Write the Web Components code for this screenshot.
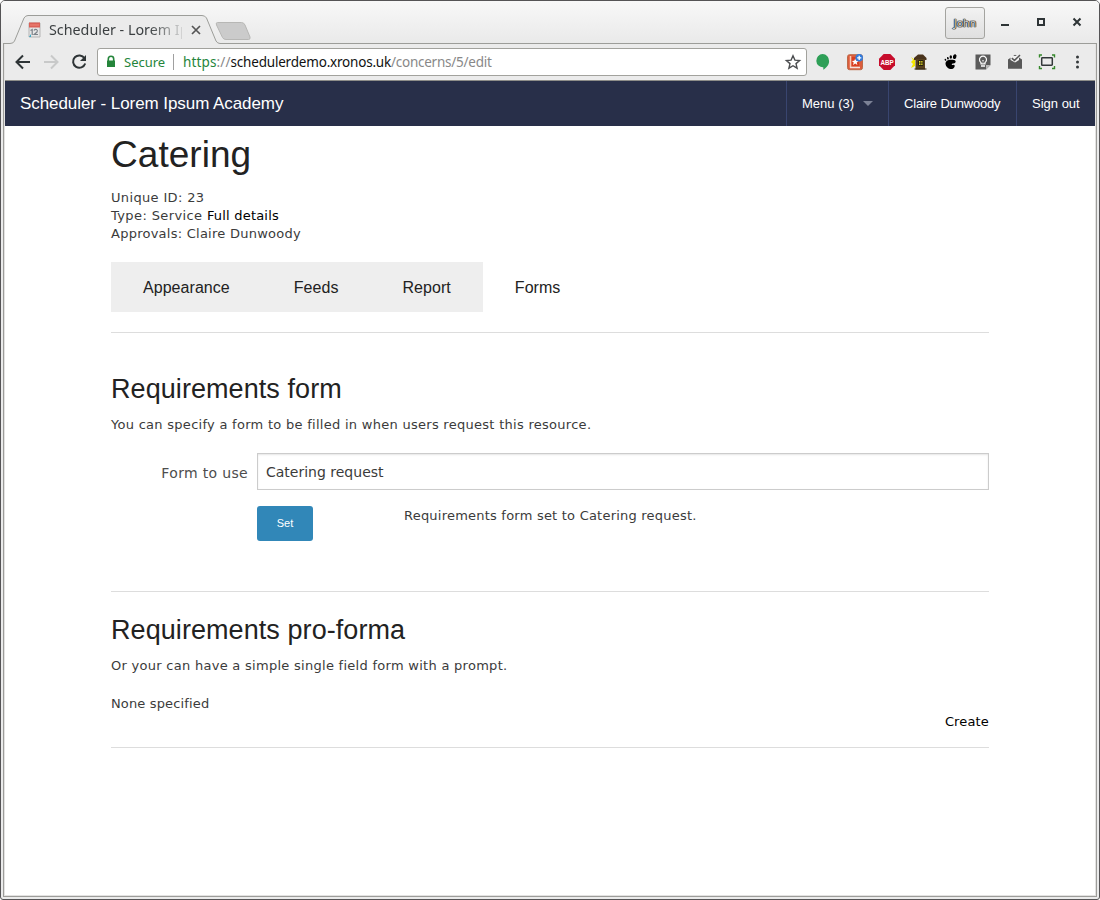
<!DOCTYPE html>
<html lang="en">
<head>
<meta charset="utf-8">
<title>Scheduler - Lorem Ipsum Academy</title>
<style>
html,body{margin:0;padding:0;background:#fff;height:900px;overflow:hidden}
</style>
</head>
<body>
<browser-window>
  <tab-strip slot="tabs" user="John">Scheduler - Lorem Ip</tab-strip>
  <tool-bar slot="tools"></tool-bar>
  <nav-bar>
    <span slot="title">Scheduler - Lorem Ipsum Academy</span>
    <nav-item arrow style="width:102px">Menu (3)</nav-item>
    <nav-item style="width:128px;letter-spacing:-.17px">Claire Dunwoody</nav-item>
    <nav-item style="width:79px">Sign out</nav-item>
  </nav-bar>
  <concern-page></concern-page>
</browser-window>
<script>
function define(name, html, setup) {
  const t = document.createElement('template');
  t.innerHTML = html;
  customElements.define(name, class extends HTMLElement {
    constructor() {
      super();
      this.attachShadow({mode: 'open'}).append(t.content.cloneNode(true));
    }
    connectedCallback() { if (setup) setup(this, this.shadowRoot); }
  });
}

define('browser-window', `<style>
:host{display:flex;flex-direction:column;box-sizing:border-box;width:1100px;height:900px;border:1px solid #555456;border-radius:5px 5px 3px 3px;background:#ebebeb;overflow:hidden;font-family:"DejaVu Sans",sans-serif}
.frame{flex:1;display:flex;flex-direction:column;min-height:0;margin:0 2px 2px;border:1px solid #9d9d9a;border-top:0;padding:0 1px 1px;background:#e3e2e1}
.view{flex:1;background:#fff;min-height:0}
</style><slot name="tabs"></slot><div class="frame"><slot name="tools"></slot><div class="view"><slot></slot></div></div>`);

define('tab-strip', `<style>
:host{display:flex;height:43px;box-sizing:border-box;position:relative;background:linear-gradient(#f8f8f8,#e9e9e9);font:15px "Noto Sans",sans-serif;color:#3b3f41}
.shape{position:absolute;left:-1px;top:-1px}
.label{display:flex;align-items:center;height:27px;padding:15px 0 0 27px;position:relative}
.name{width:133px;margin-left:8px;overflow:hidden;white-space:nowrap;font-size:14.3px;-webkit-mask-image:linear-gradient(90deg,#000 100px,transparent 138px);mask-image:linear-gradient(90deg,#000 100px,transparent 138px)}
.x{margin-left:9px}
.right{margin-left:auto;display:flex;align-items:center;padding-right:1px;position:relative;color:#333}
.user{box-sizing:border-box;width:40px;height:32px;margin-right:13px;border:1px solid #a4a4a0;border-radius:3px;background:linear-gradient(#f2f2f2,#dfdfdf);font:10.6px/31px "Noto Sans",sans-serif;text-align:center;color:#d8d8d8;-webkit-font-smoothing:antialiased;text-shadow:0 0 1px #222,0 0 1px #222,0 0 1px #222,0 0 1px #333,0 0 1px #333}
</style>
<svg class="shape" width="1100" height="44"><path d="M3 43.500H10Q13.500 43.500 14.500 41L24 18Q25.500 15.500 28 15.500H202Q205 15.500 206.500 18L216 41Q217.500 43.500 220 43.500H1097V44H3Z" fill="#ebebeb"/><path d="M3 43.500H10Q13.500 43.500 14.500 41L24 18Q25.500 15.500 28 15.500H202Q205 15.500 206.500 18L216 41Q217.500 43.500 220 43.500H1097" fill="none" stroke="#9c9d99"/><path d="M217.500 22.500H241.500Q244 22.500 245 25L250 37Q250.500 39.500 248.500 39.500H226Q223.500 39.500 222.500 37.500L216.500 25Q215.500 22.500 217.500 22.500Z" fill="#cbcbcb" stroke="#b7b7b5"/></svg>
<div class="label"><svg width="13" height="16" viewBox="0 0 13 16"><path d="M1 1H12V15H1Z" fill="#e6e6e6" stroke="#b5b5b5"/><path d="M1 .5H12V5.500H1Z" fill="#db6158"/><path d="M2 3h9" stroke="#f08a7b"/><path d="M2.500 8.500l1.700-1V13M6 8.500q.8-1.500 2.500-1 1.500 1 .5 2.500L6.200 12.500H10" fill="none" stroke="#7d838a" stroke-width="1.200"/><path d="M1 15l2-3v3z" fill="#36a6c4"/></svg><span class="name"><slot></slot></span><svg class="x" width="10" height="10" viewBox="0 0 10 10"><path d="M1 1L9 9M9 1L1 9" stroke="#555" stroke-width="1.700"/></svg></div>
<div class="right"><div class="user"></div><svg width="100" height="32" viewBox="0 0 100 32"><path d="M3 18h8" stroke="#2e3436" stroke-width="2"/><rect x="40" y="12" width="6" height="6" fill="none" stroke="#2e3436" stroke-width="2"/><path d="M75.500 11.500L82.500 18.500M82.500 11.500L75.500 18.500" stroke="#2e3436" stroke-width="2"/></svg></div>`,
(el, r) => { r.querySelector('.user').textContent = el.getAttribute('user'); });

define('tool-icon', `<style>:host{display:block;width:16px;height:16px}svg{display:block;overflow:visible}</style><svg width="16" height="16" viewBox="0 0 16 16"></svg>`,
(el, r) => {
  const art = {
    back: '<path d="M15 8H2M8 1.500L1.500 8L8 14.500" fill="none" stroke="#2e3436" stroke-width="2"/>',
    forward: '<path d="M1 8H14M8 1.500L14.500 8L8 14.500" fill="none" stroke="#c8c9c9" stroke-width="2"/>',
    reload: '<path d="M13.500 4.200A6.200 6.200 0 1 0 14.200 9.500" fill="none" stroke="#2e3436" stroke-width="2"/><path d="M15 1V7H9Z" fill="#2e3436"/>',
    star: '<path d="M8 1.800L9.900 6.100L14.600 6.500L11 9.600L12.100 14.200L8 11.700L3.900 14.200L5 9.600L1.400 6.500L6.100 6.100Z" fill="none" stroke="#4c4e50" stroke-width="1.400"/>',
    talk: '<path d="M7.600 0A6.700 6.700 0 0 1 14.100 7C14.100 11 11.600 13.600 8.300 15.700V13.300A6.600 6.600 0 1 1 7.600 0Z" fill="#2e9f57"/>',
    book: '<rect x=".5" y=".7" width="15" height="15" rx="2" fill="#dc5c3c" stroke="#bd6a48"/><path d="M4.500 3H12V12H4.500Z" fill="#d93f1f"/><path d="M3.500 2V14" stroke="#f9c9b5" stroke-width="1.500"/><path d="M3 13.500H13" stroke="#f4e4de" stroke-width="1.500"/><path d="M8.200 4.500l1 2.300 2.400.1-1.900 1.600.7 2.500-2.200-1.400L6 11l.7-2.500L4.900 6.900l2.400-.1z" fill="#fff"/><circle cx="12.200" cy="3.800" r="3.800" fill="#337cdb"/><path d="M12.200 1.700V5.900M10.100 3.800H14.300" stroke="#fff" stroke-width="1.300"/>',
    abp: '<path d="M4.700 0H11.300L16 4.700V11.300L11.300 16H4.700L0 11.300V4.700Z" fill="#c70d2c"/><text x="1.400" y="11" font-family="Liberation Sans,sans-serif" font-weight="700" font-size="8" textLength="13.200" lengthAdjust="spacingAndGlyphs" fill="#fff">ABP</text>',
    house: '<path d="M0 3L4 6V12L0 14L2 10L0 8L2 6Z" fill="#f5e700"/><path d="M3 4L7 .5H12L15.500 4V6H3Z" fill="#49331c"/><path d="M4.500 5H14V15.500H4.500Z" fill="#57401f"/><path d="M3.500 15H15.500" stroke="#302414"/><path d="M7.500 6.500H12V11.500H7.500Z" fill="#ece229" stroke="#26200f"/><path d="M9.800 6.500V11.500M7.500 9H12" stroke="#26200f" stroke-width=".8"/>',
    foot: '<path d="M9 5.800C14 5.400 13.500 9.600 10 9.500C8 9.500 8.500 11.500 10.500 10.700C13 10.500 11.500 15.500 7.500 15C3.700 14.300 1.200 9.800 3.200 7.400C4.700 5.800 6.500 6 9 5.800Z"/><ellipse cx="11.700" cy="2.600" rx="1.700" ry="2.500" transform="rotate(18 11.700 2.600)"/><ellipse cx="7.800" cy="3" rx="1.200" ry="1.700"/><ellipse cx="4.900" cy="4.200" rx=".9" ry="1.300" transform="rotate(-18 4.900 4.200)"/><ellipse cx="2.500" cy="5.800" rx=".8" ry="1.100" transform="rotate(-30 2.500 5.800)"/>',
    keep: '<path d="M.5.500H15.500V11L11 15.500H.5Z" fill="#5b5b5b"/><path d="M11 15.500V11H15.500Z" fill="#bababa"/><path d="M6 9.800V8.500A3.500 3.500 0 1 1 10 8.500V9.800Z" fill="none" stroke="#fff" stroke-width="1.200"/><path d="M6 12H10" stroke="#fff" stroke-width="1.600"/><path d="M7 6.500h2M8 6.500V9" stroke="#ddd" stroke-width=".7"/>',
    mail: '<path d="M1 5.500L8 .8L15 5.500V14.500H1Z" fill="#585858"/><path d="M3.500 2H12V6L8 8.500L3.500 6Z" fill="#f0f0f0"/><path d="M1 5.800L8 10L15 5.800V14.500H1Z" fill="#585858"/><path d="M4.800 4.200L7.500 6.400L13 1" fill="none" stroke="#555" stroke-width="1.500"/>',
    screen: '<rect x="2.700" y="3.700" width="10.600" height="7.600" rx=".7" fill="none" stroke="#33383a" stroke-width="1.500"/><path d="M.5 3.500V1H3M13 1H15.500V3.500M15.500 12V14.500H13M3 14.500H.5V12" fill="none" stroke="#35882b" stroke-width="1.400"/>',
    dots: '<g fill="#33383a"><circle cx="8.500" cy="3" r="1.500"/><circle cx="8.500" cy="8" r="1.500"/><circle cx="8.500" cy="13" r="1.500"/></g>',
    lock: '<path d="M4.300 7.500V5A2.700 2.700 0 0 1 9.700 5V7.500" fill="none" stroke="#25853b" stroke-width="1.600"/><rect x="3" y="6.500" width="8" height="6.500" rx=".5" fill="#25853b"/>'
  };
  r.querySelector('svg').innerHTML = art[el.getAttribute('kind')];
});

define('tool-bar', `<style>
:host{display:flex;align-items:center;height:37px;box-sizing:border-box;padding:0 8px 0 10px;background:#ebebeb;border-bottom:1px solid #8e8e89}
.nav{display:flex;gap:12px;width:82px}
.address{display:flex;align-items:center;box-sizing:border-box;width:710px;height:28px;background:#fff;border:1px solid #a2a29d;border-radius:3px;font:13.5px "Noto Sans",sans-serif;color:#888;padding:0 5px 0 6px;white-space:nowrap}
.secure{color:#25853b;margin-left:4px;width:42px;font-size:13px}
.sep{height:16px;border-left:1px solid #a0a0a0;margin:0 9px 0 7px}
.url{letter-spacing:-.25px}
.url b{font-weight:400;color:#25853b;letter-spacing:.15px}.url i{font-style:normal;color:#111;letter-spacing:-.2px}
.url u{text-decoration:none;letter-spacing:.1px}
tool-icon.star{margin-left:auto}
.ext{display:flex;gap:16px;margin-left:8px}
</style>
<div class="nav"><tool-icon kind="back"></tool-icon><tool-icon kind="forward"></tool-icon><tool-icon kind="reload"></tool-icon></div>
<div class="address"><tool-icon kind="lock"></tool-icon><span class="secure">Secure</span><span class="sep"></span><span class="url"><b>https</b><u>://</u><i>schedulerdemo.xronos.uk</i>/concerns/5/edit</span><tool-icon class="star" kind="star"></tool-icon></div>
<div class="ext"></div>`,
(el, r) => {
  r.querySelector('.ext').innerHTML = ['talk','book','abp','house','foot','keep','mail','screen'].map(k => '<tool-icon kind="' + k + '"></tool-icon>').join('') + '<tool-icon kind="dots" style="margin-left:-2px"></tool-icon>';
});

define('nav-bar', `<style>
:host{display:flex;height:45px;background:#282f49;color:#fff;font-family:"Liberation Sans",Arial,sans-serif}
.title{padding-left:15px;margin-right:auto;font-size:17px;line-height:45px;letter-spacing:-.07px}
</style><div class="title"><slot name="title"></slot></div><slot></slot>`);

define('nav-item', `<style>
:host{display:flex;align-items:center;box-sizing:border-box;padding-left:15px;border-left:1px solid #39456f;font-size:13px;line-height:45px}
i{display:none;margin-left:9px;border:5px solid transparent;border-top-color:#7c8296;border-bottom:0}
:host([arrow]) i{display:block}
</style><slot></slot><i></i>`);

define('tab-item', `<style>
:host{display:block;height:50px;padding:0 32px;box-sizing:border-box;background:#eee;color:#222;font:16px/52px "Liberation Sans",Arial,sans-serif;letter-spacing:.05px}
:host([active]){background:#fff}
</style><slot></slot>`);

define('section-heading', `<style>
:host{display:block;color:#222;font:27px/38px "Liberation Sans",Arial,sans-serif;letter-spacing:.07px}
</style><slot></slot>`);

define('concern-page', `<style>
:host{display:block;width:878px;margin-left:106px;color:#3b3b3b;font:13px/18px "DejaVu Sans",sans-serif;letter-spacing:.28px}
h1{margin:0;padding-top:3px;font:37px/52px "Liberation Sans",Arial,sans-serif;letter-spacing:.05px;color:#222}
.meta{margin-top:8px}
a{color:#000}
.tabs{display:flex;margin-top:19px}
hr{border:0;border-top:1px solid #ddd;margin:20px 0 0}
.s1{margin-top:37px}
p{margin:0}
.desc{margin-top:8px}
.row{display:flex;height:37px;margin-top:19px;font-size:14px;line-height:40px}
.row label{width:137px;padding-right:9px;text-align:right;color:#4d4d4d;letter-spacing:.33px}
.field{flex:1;box-sizing:border-box;height:37px;border:1px solid #ccc;box-shadow:inset 0 1px 2px rgba(0,0,0,.1);padding-left:8px;line-height:37px;letter-spacing:0}
.act{display:flex;padding-left:146px;margin-top:16px}
.btn{width:56px;height:35px;border-radius:3px;background:#3187b8;color:#fff;font:11px/35px "Liberation Sans",Arial,sans-serif;letter-spacing:0;text-align:center}
.msg{margin-left:91px;margin-top:1px;letter-spacing:.22px}
.s2{margin-top:19px}
.create{text-align:right;letter-spacing:.15px}
.none{margin-top:20px;letter-spacing:.15px}
</style>
<h1>Catering</h1>
<div class="meta"><div style="letter-spacing:.35px">Unique ID: 23</div><div><span style="letter-spacing:.38px">Type: Service </span><a style="letter-spacing:.2px">Full details</a></div><div style="letter-spacing:.25px">Approvals: Claire Dunwoody</div></div>
<div class="tabs"><tab-item>Appearance</tab-item><tab-item>Feeds</tab-item><tab-item>Report</tab-item><tab-item active>Forms</tab-item></div>
<hr>
<section-heading class="s1">Requirements form</section-heading>
<p class="desc">You can specify a form to be filled in when users request this resource.</p>
<div class="row"><label>Form to use</label><div class="field">Catering request</div></div>
<div class="act"><div class="btn">Set</div><div class="msg">Requirements form set to Catering request.</div></div>
<hr style="margin-top:50px">
<section-heading class="s2">Requirements pro-forma</section-heading>
<p class="desc">Or your can have a simple single field form with a prompt.</p>
<p class="none">None specified</p>
<div class="create"><a>Create</a></div>
<hr style="margin-top:16px">`);
</script>
</body>
</html>
